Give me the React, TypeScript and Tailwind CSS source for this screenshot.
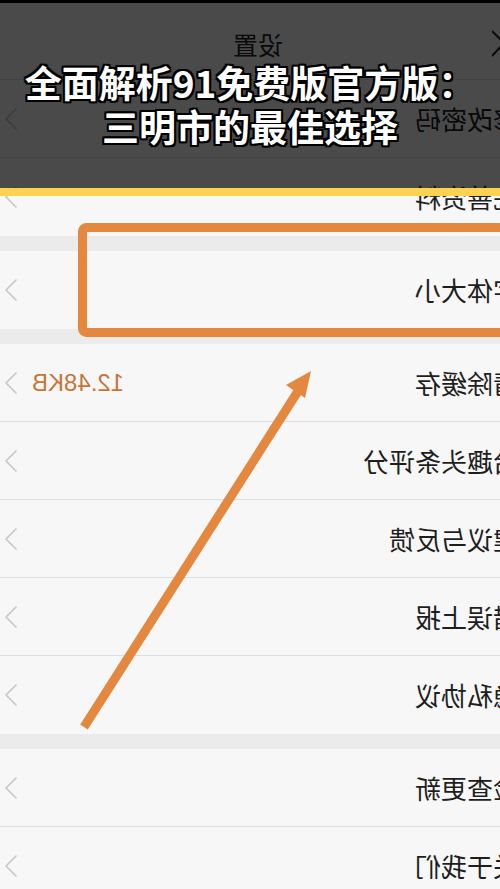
import React from "react";

// Settings screen (captured mirrored), with an overlay banner and
// orange annotation marks drawn over it.

type Row = { label: string; value?: string };

const groups: Row[][] = [
  [{ label: "修改密码" }, { label: "完善资料" }],
  [{ label: "字体大小" }],
  [
    { label: "清除缓存", value: "12.48KB" },
    { label: "给趣头条评分" },
    { label: "建议与反馈" },
    { label: "错误上报" },
    { label: "隐私协议" },
  ],
  [{ label: "检查更新" }, { label: "关于我们" }],
];

const cjk = { fontFamily: '"Noto Sans CJK SC", "Noto Sans", sans-serif' };

function Chevron() {
  return (
    <svg width="14" height="24" viewBox="0 0 14 24" className="shrink-0">
      <polyline
        points="12,2 2,12 12,22"
        fill="none"
        stroke="#c6c6c6"
        strokeWidth="1.6"
        strokeLinecap="round"
        strokeLinejoin="round"
      />
    </svg>
  );
}

function SettingRow({ row, last }: { row: Row; last: boolean }) {
  return (
    <div
      className={`flex h-[78px] items-center justify-between bg-[#f7f7f7] pl-[4px] ${
        last ? "" : "border-b border-[#dedede]"
      }`}
    >
      <div className="flex items-center gap-[14px]">
        <Chevron />
        {row.value && (
          <span
            className="inline-block -scale-x-100 text-[24px] leading-none text-[#c4773a]"
            style={{ fontFamily: '"Liberation Sans", Arial, sans-serif' }}
          >
            {row.value}
          </span>
        )}
      </div>
      <span
        className="-mr-[19px] inline-block shrink-0 -scale-x-100 whitespace-nowrap text-[26px] leading-none text-[#1e1e1e]"
        style={cjk}
      >
        {row.label}
      </span>
    </div>
  );
}

export default function App() {
  const outline =
    "[text-shadow:2px_0_0_#000,-2px_0_0_#000,0_2px_0_#000,0_-2px_0_#000,2px_2px_0_#000,-2px_-2px_0_#000,2px_-2px_0_#000,-2px_2px_0_#000]";

  return (
    <div className="relative h-[889px] w-[500px] overflow-hidden bg-[#ebebeb]">
      <div className="h-[3px] bg-black" />

      {/* Header */}
      <div className="grid h-[77px] grid-cols-[1fr_auto_1fr] items-center border-b border-[#dedede] bg-[#f7f7f7] pt-[6px]">
        <div />
        <span
          className="ml-[16px] inline-block -scale-x-100 text-[25px] leading-none text-[#222]"
          style={cjk}
        >
          设置
        </span>
        <div className="flex justify-end">
          <svg width="12" height="30" viewBox="0 0 12 30" className="-mr-[4px]">
            <polyline
              points="0,2 12,14 0,27"
              fill="none"
              stroke="#222"
              strokeWidth="2"
            />
          </svg>
        </div>
      </div>

      {groups.map((g, gi) => (
        <div key={gi} className={gi > 0 ? "mt-[15px]" : ""}>
          {g.map((r, ri) => (
            <SettingRow key={r.label} row={r} last={ri === g.length - 1} />
          ))}
        </div>
      ))}

      {/* Annotation marks */}
      <svg
        className="pointer-events-none absolute left-0 top-0"
        width="500"
        height="889"
        viewBox="0 0 500 889"
      >
        <rect
          x="82.5"
          y="227.5"
          width="480"
          height="105"
          rx="4"
          fill="none"
          stroke="#e4883f"
          strokeWidth="9"
        />
        <line
          x1="84"
          y1="727"
          x2="300"
          y2="388"
          stroke="#e4883f"
          strokeWidth="9"
        />
        <polygon points="311,371 286,385 305,398" fill="#e4883f" />
      </svg>

      {/* Banner */}
      <div className="absolute left-0 top-0 w-full">
        <div className="flex h-[188px] flex-col items-center justify-center bg-black/70 pt-[20px]">
          <div
            className={`text-center text-[37px] font-bold leading-[44px] text-white ${outline}`}
            style={cjk}
          >
            <div>全面解析91免费版官方版：</div>
            <div>三明市的最佳选择</div>
          </div>
        </div>
        <div className="h-[8px] bg-[#fdd24f]" />
      </div>
    </div>
  );
}
